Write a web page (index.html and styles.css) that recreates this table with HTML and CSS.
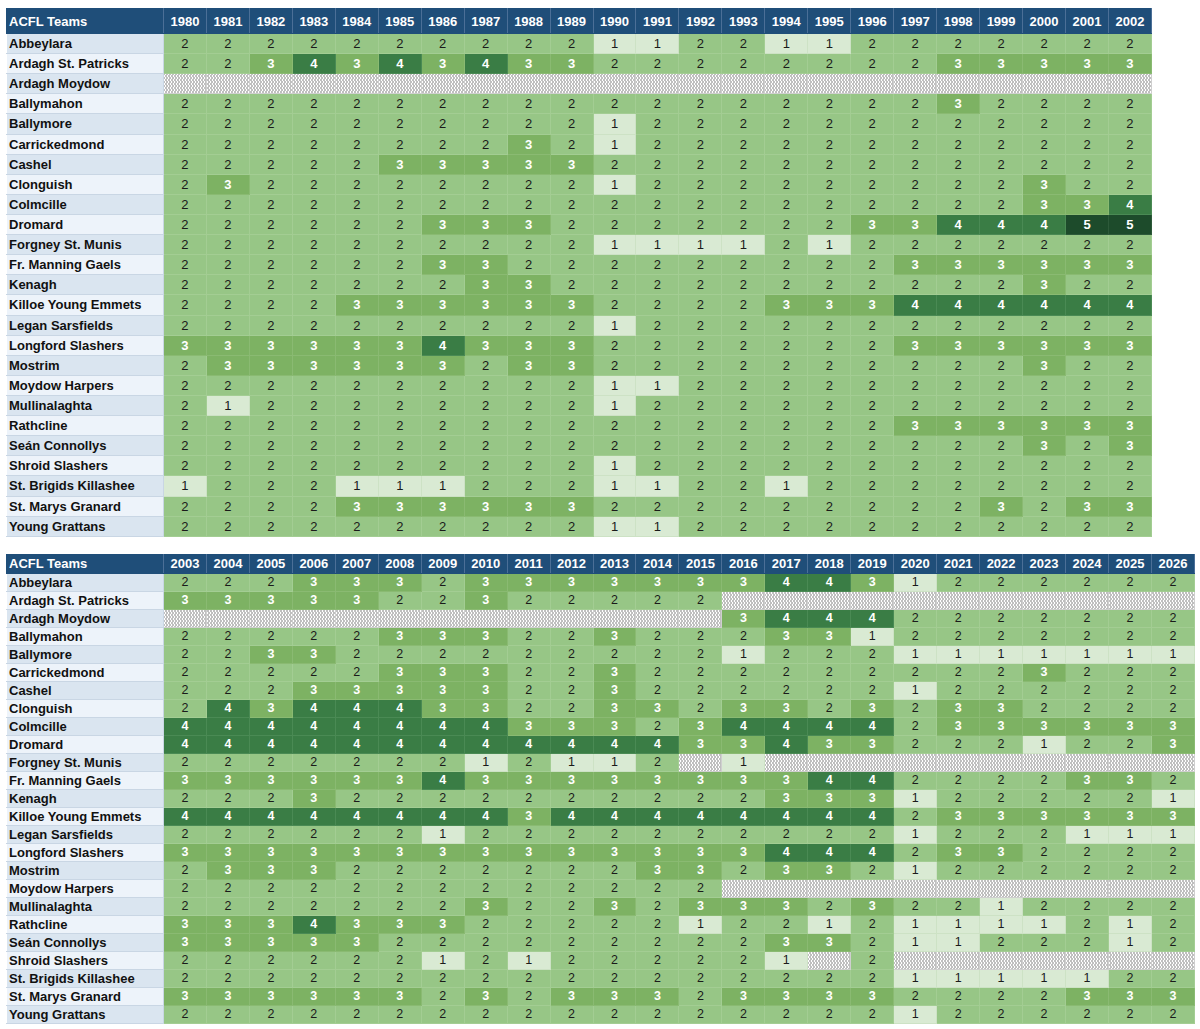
FILE: index.html
```html
<!DOCTYPE html>
<html lang="en">
<head>
<meta charset="utf-8">
<title>ACFL Teams</title>
<link rel="stylesheet" href="styles.css">
</head>
<body>
<table class="grid grid-a">
<colgroup><col class="team-col"><col span="23" class="year-col"></colgroup>
<thead>
<tr><th class="team-h">ACFL Teams</th><th>1980</th><th>1981</th><th>1982</th><th>1983</th><th>1984</th><th>1985</th><th>1986</th><th>1987</th><th>1988</th><th>1989</th><th>1990</th><th>1991</th><th>1992</th><th>1993</th><th>1994</th><th>1995</th><th>1996</th><th>1997</th><th>1998</th><th>1999</th><th>2000</th><th>2001</th><th>2002</th></tr>
</thead>
<tbody>
<tr><th>Abbeylara</th><td>2</td><td>2</td><td>2</td><td>2</td><td>2</td><td>2</td><td>2</td><td>2</td><td>2</td><td>2</td><td class=l1>1</td><td class=l1>1</td><td>2</td><td>2</td><td class=l1>1</td><td class=l1>1</td><td>2</td><td>2</td><td>2</td><td>2</td><td>2</td><td>2</td><td>2</td></tr>
<tr><th>Ardagh St. Patricks</th><td>2</td><td>2</td><td class=l3>3</td><td class=l4>4</td><td class=l3>3</td><td class=l4>4</td><td class=l3>3</td><td class=l4>4</td><td class=l3>3</td><td class=l3>3</td><td>2</td><td>2</td><td>2</td><td>2</td><td>2</td><td>2</td><td>2</td><td>2</td><td class=l3>3</td><td class=l3>3</td><td class=l3>3</td><td class=l3>3</td><td class=l3>3</td></tr>
<tr><th>Ardagh Moydow</th><td class=nd></td><td class=nd></td><td class=nd></td><td class=nd></td><td class=nd></td><td class=nd></td><td class=nd></td><td class=nd></td><td class=nd></td><td class=nd></td><td class=nd></td><td class=nd></td><td class=nd></td><td class=nd></td><td class=nd></td><td class=nd></td><td class=nd></td><td class=nd></td><td class=nd></td><td class=nd></td><td class=nd></td><td class=nd></td><td class=nd></td></tr>
<tr><th>Ballymahon</th><td>2</td><td>2</td><td>2</td><td>2</td><td>2</td><td>2</td><td>2</td><td>2</td><td>2</td><td>2</td><td>2</td><td>2</td><td>2</td><td>2</td><td>2</td><td>2</td><td>2</td><td>2</td><td class=l3>3</td><td>2</td><td>2</td><td>2</td><td>2</td></tr>
<tr><th>Ballymore</th><td>2</td><td>2</td><td>2</td><td>2</td><td>2</td><td>2</td><td>2</td><td>2</td><td>2</td><td>2</td><td class=l1>1</td><td>2</td><td>2</td><td>2</td><td>2</td><td>2</td><td>2</td><td>2</td><td>2</td><td>2</td><td>2</td><td>2</td><td>2</td></tr>
<tr><th>Carrickedmond</th><td>2</td><td>2</td><td>2</td><td>2</td><td>2</td><td>2</td><td>2</td><td>2</td><td class=l3>3</td><td>2</td><td class=l1>1</td><td>2</td><td>2</td><td>2</td><td>2</td><td>2</td><td>2</td><td>2</td><td>2</td><td>2</td><td>2</td><td>2</td><td>2</td></tr>
<tr><th>Cashel</th><td>2</td><td>2</td><td>2</td><td>2</td><td>2</td><td class=l3>3</td><td class=l3>3</td><td class=l3>3</td><td class=l3>3</td><td class=l3>3</td><td>2</td><td>2</td><td>2</td><td>2</td><td>2</td><td>2</td><td>2</td><td>2</td><td>2</td><td>2</td><td>2</td><td>2</td><td>2</td></tr>
<tr><th>Clonguish</th><td>2</td><td class=l3>3</td><td>2</td><td>2</td><td>2</td><td>2</td><td>2</td><td>2</td><td>2</td><td>2</td><td class=l1>1</td><td>2</td><td>2</td><td>2</td><td>2</td><td>2</td><td>2</td><td>2</td><td>2</td><td>2</td><td class=l3>3</td><td>2</td><td>2</td></tr>
<tr><th>Colmcille</th><td>2</td><td>2</td><td>2</td><td>2</td><td>2</td><td>2</td><td>2</td><td>2</td><td>2</td><td>2</td><td>2</td><td>2</td><td>2</td><td>2</td><td>2</td><td>2</td><td>2</td><td>2</td><td>2</td><td>2</td><td class=l3>3</td><td class=l3>3</td><td class=l4>4</td></tr>
<tr><th>Dromard</th><td>2</td><td>2</td><td>2</td><td>2</td><td>2</td><td>2</td><td class=l3>3</td><td class=l3>3</td><td class=l3>3</td><td>2</td><td>2</td><td>2</td><td>2</td><td>2</td><td>2</td><td>2</td><td class=l3>3</td><td class=l3>3</td><td class=l4>4</td><td class=l4>4</td><td class=l4>4</td><td class=l5>5</td><td class=l5>5</td></tr>
<tr><th>Forgney St. Munis</th><td>2</td><td>2</td><td>2</td><td>2</td><td>2</td><td>2</td><td>2</td><td>2</td><td>2</td><td>2</td><td class=l1>1</td><td class=l1>1</td><td class=l1>1</td><td class=l1>1</td><td>2</td><td class=l1>1</td><td>2</td><td>2</td><td>2</td><td>2</td><td>2</td><td>2</td><td>2</td></tr>
<tr><th>Fr. Manning Gaels</th><td>2</td><td>2</td><td>2</td><td>2</td><td>2</td><td>2</td><td class=l3>3</td><td class=l3>3</td><td>2</td><td>2</td><td>2</td><td>2</td><td>2</td><td>2</td><td>2</td><td>2</td><td>2</td><td class=l3>3</td><td class=l3>3</td><td class=l3>3</td><td class=l3>3</td><td class=l3>3</td><td class=l3>3</td></tr>
<tr><th>Kenagh</th><td>2</td><td>2</td><td>2</td><td>2</td><td>2</td><td>2</td><td>2</td><td class=l3>3</td><td class=l3>3</td><td>2</td><td>2</td><td>2</td><td>2</td><td>2</td><td>2</td><td>2</td><td>2</td><td>2</td><td>2</td><td>2</td><td class=l3>3</td><td>2</td><td>2</td></tr>
<tr><th>Killoe Young Emmets</th><td>2</td><td>2</td><td>2</td><td>2</td><td class=l3>3</td><td class=l3>3</td><td class=l3>3</td><td class=l3>3</td><td class=l3>3</td><td class=l3>3</td><td>2</td><td>2</td><td>2</td><td>2</td><td class=l3>3</td><td class=l3>3</td><td class=l3>3</td><td class=l4>4</td><td class=l4>4</td><td class=l4>4</td><td class=l4>4</td><td class=l4>4</td><td class=l4>4</td></tr>
<tr><th>Legan Sarsfields</th><td>2</td><td>2</td><td>2</td><td>2</td><td>2</td><td>2</td><td>2</td><td>2</td><td>2</td><td>2</td><td class=l1>1</td><td>2</td><td>2</td><td>2</td><td>2</td><td>2</td><td>2</td><td>2</td><td>2</td><td>2</td><td>2</td><td>2</td><td>2</td></tr>
<tr><th>Longford Slashers</th><td class=l3>3</td><td class=l3>3</td><td class=l3>3</td><td class=l3>3</td><td class=l3>3</td><td class=l3>3</td><td class=l4>4</td><td class=l3>3</td><td class=l3>3</td><td class=l3>3</td><td>2</td><td>2</td><td>2</td><td>2</td><td>2</td><td>2</td><td>2</td><td class=l3>3</td><td class=l3>3</td><td class=l3>3</td><td class=l3>3</td><td class=l3>3</td><td class=l3>3</td></tr>
<tr><th>Mostrim</th><td>2</td><td class=l3>3</td><td class=l3>3</td><td class=l3>3</td><td class=l3>3</td><td class=l3>3</td><td class=l3>3</td><td>2</td><td class=l3>3</td><td class=l3>3</td><td>2</td><td>2</td><td>2</td><td>2</td><td>2</td><td>2</td><td>2</td><td>2</td><td>2</td><td>2</td><td class=l3>3</td><td>2</td><td>2</td></tr>
<tr><th>Moydow Harpers</th><td>2</td><td>2</td><td>2</td><td>2</td><td>2</td><td>2</td><td>2</td><td>2</td><td>2</td><td>2</td><td class=l1>1</td><td class=l1>1</td><td>2</td><td>2</td><td>2</td><td>2</td><td>2</td><td>2</td><td>2</td><td>2</td><td>2</td><td>2</td><td>2</td></tr>
<tr><th>Mullinalaghta</th><td>2</td><td class=l1>1</td><td>2</td><td>2</td><td>2</td><td>2</td><td>2</td><td>2</td><td>2</td><td>2</td><td class=l1>1</td><td>2</td><td>2</td><td>2</td><td>2</td><td>2</td><td>2</td><td>2</td><td>2</td><td>2</td><td>2</td><td>2</td><td>2</td></tr>
<tr><th>Rathcline</th><td>2</td><td>2</td><td>2</td><td>2</td><td>2</td><td>2</td><td>2</td><td>2</td><td>2</td><td>2</td><td>2</td><td>2</td><td>2</td><td>2</td><td>2</td><td>2</td><td>2</td><td class=l3>3</td><td class=l3>3</td><td class=l3>3</td><td class=l3>3</td><td class=l3>3</td><td class=l3>3</td></tr>
<tr><th>Seán Connollys</th><td>2</td><td>2</td><td>2</td><td>2</td><td>2</td><td>2</td><td>2</td><td>2</td><td>2</td><td>2</td><td>2</td><td>2</td><td>2</td><td>2</td><td>2</td><td>2</td><td>2</td><td>2</td><td>2</td><td>2</td><td class=l3>3</td><td>2</td><td class=l3>3</td></tr>
<tr><th>Shroid Slashers</th><td>2</td><td>2</td><td>2</td><td>2</td><td>2</td><td>2</td><td>2</td><td>2</td><td>2</td><td>2</td><td class=l1>1</td><td>2</td><td>2</td><td>2</td><td>2</td><td>2</td><td>2</td><td>2</td><td>2</td><td>2</td><td>2</td><td>2</td><td>2</td></tr>
<tr><th>St. Brigids Killashee</th><td class=l1>1</td><td>2</td><td>2</td><td>2</td><td class=l1>1</td><td class=l1>1</td><td class=l1>1</td><td>2</td><td>2</td><td>2</td><td class=l1>1</td><td class=l1>1</td><td>2</td><td>2</td><td class=l1>1</td><td>2</td><td>2</td><td>2</td><td>2</td><td>2</td><td>2</td><td>2</td><td>2</td></tr>
<tr><th>St. Marys Granard</th><td>2</td><td>2</td><td>2</td><td>2</td><td class=l3>3</td><td class=l3>3</td><td class=l3>3</td><td class=l3>3</td><td class=l3>3</td><td class=l3>3</td><td>2</td><td>2</td><td>2</td><td>2</td><td>2</td><td>2</td><td>2</td><td>2</td><td>2</td><td class=l3>3</td><td>2</td><td class=l3>3</td><td class=l3>3</td></tr>
<tr><th>Young Grattans</th><td>2</td><td>2</td><td>2</td><td>2</td><td>2</td><td>2</td><td>2</td><td>2</td><td>2</td><td>2</td><td class=l1>1</td><td class=l1>1</td><td>2</td><td>2</td><td>2</td><td>2</td><td>2</td><td>2</td><td>2</td><td>2</td><td>2</td><td>2</td><td>2</td></tr>
</tbody>
</table>

<table class="grid grid-b">
<colgroup><col class="team-col"><col span="24" class="year-col"></colgroup>
<thead>
<tr><th class="team-h">ACFL Teams</th><th>2003</th><th>2004</th><th>2005</th><th>2006</th><th>2007</th><th>2008</th><th>2009</th><th>2010</th><th>2011</th><th>2012</th><th>2013</th><th>2014</th><th>2015</th><th>2016</th><th>2017</th><th>2018</th><th>2019</th><th>2020</th><th>2021</th><th>2022</th><th>2023</th><th>2024</th><th>2025</th><th>2026</th></tr>
</thead>
<tbody>
<tr><th>Abbeylara</th><td>2</td><td>2</td><td>2</td><td class=l3>3</td><td class=l3>3</td><td class=l3>3</td><td>2</td><td class=l3>3</td><td class=l3>3</td><td class=l3>3</td><td class=l3>3</td><td class=l3>3</td><td class=l3>3</td><td class=l3>3</td><td class=l4>4</td><td class=l4>4</td><td class=l3>3</td><td class=l1>1</td><td>2</td><td>2</td><td>2</td><td>2</td><td>2</td><td>2</td></tr>
<tr><th>Ardagh St. Patricks</th><td class=l3>3</td><td class=l3>3</td><td class=l3>3</td><td class=l3>3</td><td class=l3>3</td><td>2</td><td>2</td><td class=l3>3</td><td>2</td><td>2</td><td>2</td><td>2</td><td>2</td><td class=nd></td><td class=nd></td><td class=nd></td><td class=nd></td><td class=nd></td><td class=nd></td><td class=nd></td><td class=nd></td><td class=nd></td><td class=nd></td><td class=nd></td></tr>
<tr><th>Ardagh Moydow</th><td class=nd></td><td class=nd></td><td class=nd></td><td class=nd></td><td class=nd></td><td class=nd></td><td class=nd></td><td class=nd></td><td class=nd></td><td class=nd></td><td class=nd></td><td class=nd></td><td class=nd></td><td class=l3>3</td><td class=l4>4</td><td class=l4>4</td><td class=l4>4</td><td>2</td><td>2</td><td>2</td><td>2</td><td>2</td><td>2</td><td>2</td></tr>
<tr><th>Ballymahon</th><td>2</td><td>2</td><td>2</td><td>2</td><td>2</td><td class=l3>3</td><td class=l3>3</td><td class=l3>3</td><td>2</td><td>2</td><td class=l3>3</td><td>2</td><td>2</td><td>2</td><td class=l3>3</td><td class=l3>3</td><td class=l1>1</td><td>2</td><td>2</td><td>2</td><td>2</td><td>2</td><td>2</td><td>2</td></tr>
<tr><th>Ballymore</th><td>2</td><td>2</td><td class=l3>3</td><td class=l3>3</td><td>2</td><td>2</td><td>2</td><td>2</td><td>2</td><td>2</td><td>2</td><td>2</td><td>2</td><td class=l1>1</td><td>2</td><td>2</td><td>2</td><td class=l1>1</td><td class=l1>1</td><td class=l1>1</td><td class=l1>1</td><td class=l1>1</td><td class=l1>1</td><td class=l1>1</td></tr>
<tr><th>Carrickedmond</th><td>2</td><td>2</td><td>2</td><td>2</td><td>2</td><td class=l3>3</td><td class=l3>3</td><td class=l3>3</td><td>2</td><td>2</td><td class=l3>3</td><td>2</td><td>2</td><td>2</td><td>2</td><td>2</td><td>2</td><td>2</td><td>2</td><td>2</td><td class=l3>3</td><td>2</td><td>2</td><td>2</td></tr>
<tr><th>Cashel</th><td>2</td><td>2</td><td>2</td><td class=l3>3</td><td class=l3>3</td><td class=l3>3</td><td class=l3>3</td><td class=l3>3</td><td>2</td><td>2</td><td class=l3>3</td><td>2</td><td>2</td><td>2</td><td>2</td><td>2</td><td>2</td><td class=l1>1</td><td>2</td><td>2</td><td>2</td><td>2</td><td>2</td><td>2</td></tr>
<tr><th>Clonguish</th><td>2</td><td class=l4>4</td><td class=l3>3</td><td class=l4>4</td><td class=l4>4</td><td class=l4>4</td><td class=l3>3</td><td class=l3>3</td><td>2</td><td>2</td><td class=l3>3</td><td class=l3>3</td><td>2</td><td class=l3>3</td><td class=l3>3</td><td>2</td><td class=l3>3</td><td>2</td><td class=l3>3</td><td class=l3>3</td><td>2</td><td>2</td><td>2</td><td>2</td></tr>
<tr><th>Colmcille</th><td class=l4>4</td><td class=l4>4</td><td class=l4>4</td><td class=l4>4</td><td class=l4>4</td><td class=l4>4</td><td class=l4>4</td><td class=l4>4</td><td class=l3>3</td><td class=l3>3</td><td class=l3>3</td><td>2</td><td class=l3>3</td><td class=l4>4</td><td class=l4>4</td><td class=l4>4</td><td class=l4>4</td><td>2</td><td class=l3>3</td><td class=l3>3</td><td class=l3>3</td><td class=l3>3</td><td class=l3>3</td><td class=l3>3</td></tr>
<tr><th>Dromard</th><td class=l4>4</td><td class=l4>4</td><td class=l4>4</td><td class=l4>4</td><td class=l4>4</td><td class=l4>4</td><td class=l4>4</td><td class=l4>4</td><td class=l4>4</td><td class=l4>4</td><td class=l4>4</td><td class=l4>4</td><td class=l3>3</td><td class=l3>3</td><td class=l4>4</td><td class=l3>3</td><td class=l3>3</td><td>2</td><td>2</td><td>2</td><td class=l1>1</td><td>2</td><td>2</td><td class=l3>3</td></tr>
<tr><th>Forgney St. Munis</th><td>2</td><td>2</td><td>2</td><td>2</td><td>2</td><td>2</td><td>2</td><td class=l1>1</td><td>2</td><td class=l1>1</td><td class=l1>1</td><td>2</td><td class=nd></td><td class=l1>1</td><td class=nd></td><td class=nd></td><td class=nd></td><td class=nd></td><td class=nd></td><td class=nd></td><td class=nd></td><td class=nd></td><td class=nd></td><td class=nd></td></tr>
<tr><th>Fr. Manning Gaels</th><td class=l3>3</td><td class=l3>3</td><td class=l3>3</td><td class=l3>3</td><td class=l3>3</td><td class=l3>3</td><td class=l4>4</td><td class=l3>3</td><td class=l3>3</td><td class=l3>3</td><td class=l3>3</td><td class=l3>3</td><td class=l3>3</td><td class=l3>3</td><td class=l3>3</td><td class=l4>4</td><td class=l4>4</td><td>2</td><td>2</td><td>2</td><td>2</td><td class=l3>3</td><td class=l3>3</td><td>2</td></tr>
<tr><th>Kenagh</th><td>2</td><td>2</td><td>2</td><td class=l3>3</td><td>2</td><td>2</td><td>2</td><td>2</td><td>2</td><td>2</td><td>2</td><td>2</td><td>2</td><td>2</td><td class=l3>3</td><td class=l3>3</td><td class=l3>3</td><td class=l1>1</td><td>2</td><td>2</td><td>2</td><td>2</td><td>2</td><td class=l1>1</td></tr>
<tr><th>Killoe Young Emmets</th><td class=l4>4</td><td class=l4>4</td><td class=l4>4</td><td class=l4>4</td><td class=l4>4</td><td class=l4>4</td><td class=l4>4</td><td class=l4>4</td><td class=l3>3</td><td class=l4>4</td><td class=l4>4</td><td class=l4>4</td><td class=l4>4</td><td class=l4>4</td><td class=l4>4</td><td class=l4>4</td><td class=l4>4</td><td>2</td><td class=l3>3</td><td class=l3>3</td><td class=l3>3</td><td class=l3>3</td><td class=l3>3</td><td class=l3>3</td></tr>
<tr><th>Legan Sarsfields</th><td>2</td><td>2</td><td>2</td><td>2</td><td>2</td><td>2</td><td class=l1>1</td><td>2</td><td>2</td><td>2</td><td>2</td><td>2</td><td>2</td><td>2</td><td>2</td><td>2</td><td>2</td><td class=l1>1</td><td>2</td><td>2</td><td>2</td><td class=l1>1</td><td class=l1>1</td><td class=l1>1</td></tr>
<tr><th>Longford Slashers</th><td class=l3>3</td><td class=l3>3</td><td class=l3>3</td><td class=l3>3</td><td class=l3>3</td><td class=l3>3</td><td class=l3>3</td><td class=l3>3</td><td class=l3>3</td><td class=l3>3</td><td class=l3>3</td><td class=l3>3</td><td class=l3>3</td><td class=l3>3</td><td class=l4>4</td><td class=l4>4</td><td class=l4>4</td><td>2</td><td class=l3>3</td><td class=l3>3</td><td>2</td><td>2</td><td>2</td><td>2</td></tr>
<tr><th>Mostrim</th><td>2</td><td class=l3>3</td><td class=l3>3</td><td class=l3>3</td><td>2</td><td>2</td><td>2</td><td>2</td><td>2</td><td>2</td><td>2</td><td class=l3>3</td><td class=l3>3</td><td>2</td><td class=l3>3</td><td class=l3>3</td><td>2</td><td class=l1>1</td><td>2</td><td>2</td><td>2</td><td>2</td><td>2</td><td>2</td></tr>
<tr><th>Moydow Harpers</th><td>2</td><td>2</td><td>2</td><td>2</td><td>2</td><td>2</td><td>2</td><td>2</td><td>2</td><td>2</td><td>2</td><td>2</td><td>2</td><td class=nd></td><td class=nd></td><td class=nd></td><td class=nd></td><td class=nd></td><td class=nd></td><td class=nd></td><td class=nd></td><td class=nd></td><td class=nd></td><td class=nd></td></tr>
<tr><th>Mullinalaghta</th><td>2</td><td>2</td><td>2</td><td>2</td><td>2</td><td>2</td><td>2</td><td class=l3>3</td><td>2</td><td>2</td><td class=l3>3</td><td>2</td><td class=l3>3</td><td class=l3>3</td><td class=l3>3</td><td>2</td><td class=l3>3</td><td>2</td><td>2</td><td class=l1>1</td><td>2</td><td>2</td><td>2</td><td>2</td></tr>
<tr><th>Rathcline</th><td class=l3>3</td><td class=l3>3</td><td class=l3>3</td><td class=l4>4</td><td class=l3>3</td><td class=l3>3</td><td class=l3>3</td><td>2</td><td>2</td><td>2</td><td>2</td><td>2</td><td class=l1>1</td><td>2</td><td>2</td><td class=l1>1</td><td>2</td><td class=l1>1</td><td class=l1>1</td><td class=l1>1</td><td class=l1>1</td><td>2</td><td class=l1>1</td><td>2</td></tr>
<tr><th>Seán Connollys</th><td class=l3>3</td><td class=l3>3</td><td class=l3>3</td><td class=l3>3</td><td class=l3>3</td><td>2</td><td>2</td><td>2</td><td>2</td><td>2</td><td>2</td><td>2</td><td>2</td><td>2</td><td class=l3>3</td><td class=l3>3</td><td>2</td><td class=l1>1</td><td class=l1>1</td><td>2</td><td>2</td><td>2</td><td class=l1>1</td><td>2</td></tr>
<tr><th>Shroid Slashers</th><td>2</td><td>2</td><td>2</td><td>2</td><td>2</td><td>2</td><td class=l1>1</td><td>2</td><td class=l1>1</td><td>2</td><td>2</td><td>2</td><td>2</td><td>2</td><td class=l1>1</td><td class=nd></td><td>2</td><td class=nd></td><td class=nd></td><td class=nd></td><td class=nd></td><td class=nd></td><td class=nd></td><td class=nd></td></tr>
<tr><th>St. Brigids Killashee</th><td>2</td><td>2</td><td>2</td><td>2</td><td>2</td><td>2</td><td>2</td><td>2</td><td>2</td><td>2</td><td>2</td><td>2</td><td>2</td><td>2</td><td>2</td><td>2</td><td>2</td><td class=l1>1</td><td class=l1>1</td><td class=l1>1</td><td class=l1>1</td><td class=l1>1</td><td>2</td><td>2</td></tr>
<tr><th>St. Marys Granard</th><td class=l3>3</td><td class=l3>3</td><td class=l3>3</td><td class=l3>3</td><td class=l3>3</td><td class=l3>3</td><td>2</td><td class=l3>3</td><td>2</td><td class=l3>3</td><td class=l3>3</td><td class=l3>3</td><td>2</td><td class=l3>3</td><td class=l3>3</td><td class=l3>3</td><td class=l3>3</td><td>2</td><td>2</td><td>2</td><td>2</td><td class=l3>3</td><td class=l3>3</td><td class=l3>3</td></tr>
<tr><th>Young Grattans</th><td>2</td><td>2</td><td>2</td><td>2</td><td>2</td><td>2</td><td>2</td><td>2</td><td>2</td><td>2</td><td>2</td><td>2</td><td>2</td><td>2</td><td>2</td><td>2</td><td>2</td><td class=l1>1</td><td>2</td><td>2</td><td>2</td><td>2</td><td>2</td><td>2</td></tr>
</tbody>
</table>
</body>
</html>
```

FILE: styles.css
```css
html, body {
  margin: 0;
  padding: 0;
  background: #ffffff;
}

body {
  padding: 8px 0 0 6px;
  font-family: "Liberation Sans", Arial, sans-serif;
}

.grid {
  border-collapse: collapse;
  table-layout: fixed;
}

.grid-a {
  width: 1146px;
}

.grid-b {
  width: 1189px;
  margin-top: 17px;
}

.team-col {
  width: 157px;
}

.grid th,
.grid td {
  padding: 0;
  overflow: hidden;
  white-space: nowrap;
  line-height: 1;
}

.grid thead th {
  background: #1f4e79;
  color: #ffffff;
  font-weight: bold;
  font-size: 13px;
  text-align: center;
  border: 1px solid #4b6f97;
  border-top-color: #1f4e79;
  border-bottom-color: #1f4e79;
}

.grid thead th.team-h {
  text-align: left;
  padding-left: 2px;
  border-left-color: #1f4e79;
}

.grid-a thead tr {
  height: 25px;
}

.grid-a tbody tr {
  height: 20.12px;
}

.grid-b thead tr {
  height: 19px;
}

.grid-b tbody tr {
  height: 18px;
}

.grid tbody th {
  text-align: left;
  padding-left: 2px;
  font-weight: bold;
  font-size: 13px;
  color: #111111;
  border: 1px solid #c9d6e4;
  border-left-color: transparent;
}

.grid tbody tr:nth-child(odd) th {
  background: #dae5f0;
}

.grid tbody tr:nth-child(even) th {
  background: #edf3fa;
}

.grid td {
  background: #97c686;
  color: #1a1a1a;
  text-align: center;
  font-size: 13px;
  border: 1px solid #a3cd93;
}

.grid-b td {
  font-size: 12.5px;
}

.grid td.l1 {
  background: #d9ead3;
  color: #1a1a1a;
  border-color: #cde2c5;
}

.grid td.l3 {
  background: #7db263;
  color: #ffffff;
  font-weight: bold;
  border-color: #8aba72;
}

.grid td.l4 {
  background: #3a7d45;
  color: #ffffff;
  font-weight: bold;
  border-color: #4a8a54;
}

.grid td.l5 {
  background: #1d4b2b;
  color: #ffffff;
  font-weight: bold;
  border-color: #2d5a3a;
}

.grid td.nd {
  background-color: #ffffff;
  background-image:
    radial-gradient(circle at 0.5px 0.5px, #000000 0.6px, transparent 0.85px),
    radial-gradient(circle at 0.5px 0.5px, #000000 0.6px, transparent 0.85px);
  background-size: 3px 4px, 3px 4px;
  background-position: 1px 1px, 2px 3px;
  border-color: #cfcfcf;
}
```
